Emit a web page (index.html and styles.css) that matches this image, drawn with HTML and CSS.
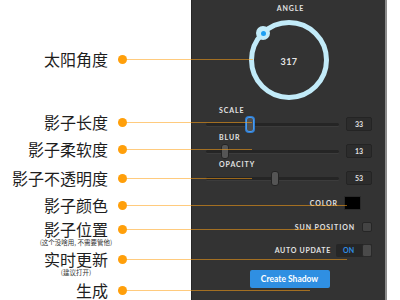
FILE: index.html
```html
<!DOCTYPE html>
<html lang="zh">
<head>
    <meta charset="UTF-8">
    <title>Shadow Panel</title>
    <link rel="stylesheet" href="styles.css">
</head>
<body>
    <div class="page">
        <div class="notes">
            <div class="note note-angle">
                <div class="note-text"><span>太阳角度</span></div>
                <span class="dot"></span><span class="lead lead-angle"></span>
            </div>
            <div class="note note-scale">
                <div class="note-text"><span>影子长度</span></div>
                <span class="dot"></span><span class="lead lead-slider"></span>
            </div>
            <div class="note">
                <div class="note-text"><span>影子柔软度</span></div>
                <span class="dot"></span><span class="lead lead-slider"></span>
            </div>
            <div class="note note-opacity">
                <div class="note-text"><span>影子不透明度</span></div>
                <span class="dot"></span><span class="lead lead-slider"></span>
            </div>
            <div class="note">
                <div class="note-text"><span>影子颜色</span></div>
                <span class="dot"></span><span class="lead lead-long"></span>
            </div>
            <div class="note note-sun">
                <div class="note-text">
                    <span>影子位置</span>
                    <small class="sub">(这个没啥用, 不需要管他)</small>
                </div>
                <span class="dot"></span><span class="lead lead-sun"></span>
            </div>
            <div class="note note-auto">
                <div class="note-text">
                    <span>实时更新</span>
                    <small class="sub">(建议打开)</small>
                </div>
                <span class="dot"></span><span class="lead lead-long"></span>
            </div>
            <div class="note note-create">
                <div class="note-text"><span>生成</span></div>
                <span class="dot"></span><span class="lead lead-create"></span>
            </div>
        </div>

        <div class="panel">
            <div class="title">ANGLE</div>
            <div class="dial">
                <span class="knob"></span>
                <span class="dial-value">317</span>
            </div>

            <div class="field field-first">
                <div class="field-label">SCALE</div>
                <div class="slider-row">
                    <div class="track"><span class="thumb focused" style="left: 33%"></span></div>
                    <div class="num">33</div>
                </div>
            </div>
            <div class="field">
                <div class="field-label">BLUR</div>
                <div class="slider-row">
                    <div class="track"><span class="thumb" style="left: 14%"></span></div>
                    <div class="num">13</div>
                </div>
            </div>
            <div class="field">
                <div class="field-label">OPACITY</div>
                <div class="slider-row">
                    <div class="track"><span class="thumb" style="left: 52%"></span></div>
                    <div class="num">53</div>
                </div>
            </div>

            <div class="opt-row color-row">
                <span class="opt-label">COLOR</span>
                <span class="swatch"></span>
            </div>
            <div class="opt-row sun-row">
                <span class="opt-label">SUN POSITION</span>
                <span class="check"></span>
            </div>
            <div class="opt-row auto-row">
                <span class="opt-label">AUTO UPDATE</span>
                <span class="toggle"><span class="toggle-on">ON</span><span class="toggle-knob"></span></span>
            </div>

            <button class="create">Create Shadow</button>
        </div>
    </div>
</body>
</html>
```

FILE: styles.css
```css
body {
    margin: 0;
    background: #ffffff;
    font-family: 'Lato', 'Noto Sans', sans-serif;
    overflow: hidden;
}

.page {
    display: flex;
    width: 400px;
    height: 300px;
}

/* left side: chinese notes with orange leaders */
.notes {
    width: 191px;
    padding-top: 50px;
    box-sizing: border-box;
}

.note {
    position: relative;
    display: flex;
    align-items: flex-start;
    justify-content: flex-end;
    width: 127px;
    margin-top: 9px;
    z-index: 2;
}

.note-angle { margin-top: 0; }
.note-scale { margin-top: 45px; }
.note-opacity { margin-top: 11px; }
.note-sun { margin-top: 6px; }
.note-auto { margin-top: 4px; }
.note-create { margin-top: 5px; }

.note-text {
    display: flex;
    flex-direction: column;
    align-items: center;
    font-family: 'Noto Sans CJK SC', sans-serif;
    font-size: 16px;
    line-height: 18px;
    color: #1e1e1e;
    margin-right: 10px;
}

.sub {
    margin: 0 -8px;
    font-size: 6.5px;
    line-height: 8px;
    color: #333;
    white-space: nowrap;
}

.dot {
    width: 9px;
    height: 9px;
    margin-top: 4.5px;
    border-radius: 50%;
    background: #ff9f0a;
    flex-shrink: 0;
}

.lead {
    position: absolute;
    left: 123px;
    top: 9px;
    height: 1px;
    background: rgba(255, 160, 20, 0.55);
}

.lead-angle { width: 130px; }
.lead-slider { width: 129px; }
.lead-sun { width: 210px; }
.lead-long { width: 224px; }
.lead-create { width: 187px; }

/* right side: dark control panel */
.panel {
    width: 196px;
    box-sizing: border-box;
    background: #333333;
    border-left: 1px solid #262626;
    border-right: 2px solid #8c8c8c;
    padding: 4px 13px 0 14px;
    display: flex;
    flex-direction: column;
}

.title,
.field-label,
.opt-label {
    font-size: 7px;
    line-height: 9px;
    font-weight: 700;
    letter-spacing: 0.9px;
    color: #e2e2e2;
}

.title {
    text-align: center;
    margin-left: 3px;
}

.dial {
    position: relative;
    width: 80px;
    height: 80px;
    margin: 7px auto 0;
    box-sizing: border-box;
    border: 5px solid #c2ebf9;
    border-radius: 50%;
    display: flex;
    align-items: center;
    justify-content: center;
}

.knob {
    position: absolute;
    left: 2px;
    top: 1px;
    width: 14px;
    height: 14px;
    border-radius: 50%;
    background: #c2ebf9;
    display: flex;
    align-items: center;
    justify-content: center;
}

.knob::after {
    content: "";
    width: 5px;
    height: 5px;
    border-radius: 50%;
    background: #1d9ff2;
}

.dial-value {
    font-size: 9px;
    font-weight: 700;
    letter-spacing: 0.5px;
    color: #e6e6e6;
    margin-top: 2px;
}

.field { margin-top: 2px; }
.field-first { margin-top: 6px; }

.field-label {
    margin: 0 0 2px 13px;
}

.slider-row {
    display: flex;
    align-items: center;
    gap: 7px;
    height: 14px;
}

.track {
    position: relative;
    flex: 1;
    height: 3px;
    border-radius: 2px;
    background: #252525;
    box-shadow: 0 1px 0 #3c3c3c;
}

.thumb {
    position: absolute;
    top: -6px;
    width: 6px;
    height: 13px;
    margin-left: -4px;
    border-radius: 3px;
    background: #555555;
    border: 1px solid #242424;
}

.thumb.focused {
    border: 1px solid #4a9cf0;
    box-shadow: 0 0 0 1px #2f7fd6;
    background: #4e4e4e;
}

.num {
    width: 26px;
    height: 14px;
    box-sizing: border-box;
    border: 1px solid #242424;
    border-radius: 2px;
    background: #2c2c2c;
    font-size: 7px;
    font-weight: 700;
    line-height: 12px;
    text-align: center;
    color: #e2e2e2;
}

.opt-row {
    display: flex;
    align-items: center;
    justify-content: flex-end;
}

.color-row {
    margin-top: 11px;
    margin-right: 11px;
    gap: 6px;
}

.swatch {
    width: 17px;
    height: 14px;
    background: #000000;
    border: 1px solid #2a2a2a;
    box-sizing: border-box;
}

.sun-row {
    margin-top: 12px;
    gap: 7px;
}

.check {
    width: 10px;
    height: 10px;
    box-sizing: border-box;
    border-radius: 2px;
    background: #444444;
    border: 1px solid #262626;
}

.auto-row {
    margin-top: 12px;
    gap: 5px;
}

.auto-row .opt-label {
    letter-spacing: 0.7px;
}

.toggle {
    display: flex;
    width: 36px;
    height: 13px;
    border-radius: 2px;
    background: #262626;
    overflow: hidden;
}

.toggle-on {
    flex: 1;
    font-size: 7px;
    font-weight: 700;
    line-height: 13px;
    color: #2f8ee6;
    padding-left: 7px;
}

.toggle-knob {
    width: 10px;
    height: 13px;
    box-sizing: border-box;
    border-radius: 2px;
    background: #4a4a4a;
    border: 1px solid #2a2a2a;
}

.create {
    align-self: center;
    margin: 13px 0 0 1px;
    width: 80px;
    height: 18px;
    padding: 0;
    border: none;
    border-radius: 2px;
    background: #2f8fe2;
    color: #ffffff;
    font-family: 'Lato', sans-serif;
    font-size: 8.5px;
    font-weight: 700;
}
```
